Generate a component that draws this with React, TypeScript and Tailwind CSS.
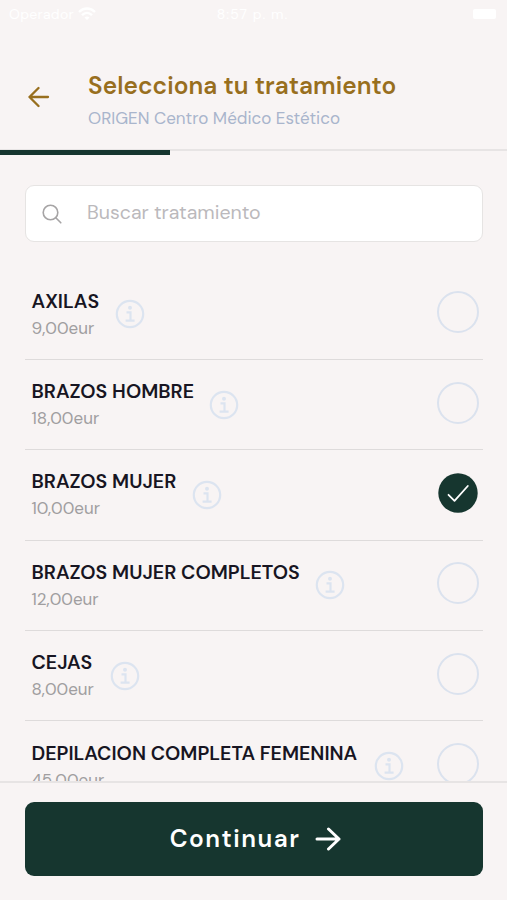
import React from "react";

type Treatment = {
  name: string;
  price: string;
  column: string;
  selected?: boolean;
};

const treatments: Treatment[] = [
  { name: "AXILAS", price: "9,00eur", column: "w-[67.5px]" },
  { name: "BRAZOS HOMBRE", price: "18,00eur", column: "w-[161.5px]" },
  { name: "BRAZOS MUJER", price: "10,00eur", column: "w-[144.5px]", selected: true },
  { name: "BRAZOS MUJER COMPLETOS", price: "12,00eur", column: "w-[267.5px]" },
  { name: "CEJAS", price: "8,00eur", column: "w-[62.5px]" },
  { name: "DEPILACION COMPLETA FEMENINA", price: "45,00eur", column: "w-[326.5px]" },
];

function StatusBar() {
  return (
    <div className="flex h-[28px] items-center justify-between pl-[9px] pr-[11px] text-[14px] leading-none text-white">
      <div className="flex w-[100px] items-center gap-[4px]">
        <span className="tracking-[0.3px]">Operador</span>
        <svg width="18" height="14" viewBox="0 0 18 14" fill="none" stroke="currentColor" strokeWidth="2.4">
          <path d="M1 5c4.5-4.6 11.5-4.6 16 0M4 8.2c3-2.9 7-2.9 10 0" />
          <path d="M6.5 10.5c1.5-1.3 3.5-1.3 5 0L9 13z" fill="currentColor" stroke="none" />
        </svg>
      </div>
      <span className="tracking-[1px]">8:57 p. m.</span>
      <div className="flex w-[100px] justify-end">
        <div className="h-[10px] w-[23px] rounded-[2px] bg-white" />
      </div>
    </div>
  );
}

function InfoIcon() {
  return (
    <svg className="shrink-0" width="30" height="30" viewBox="0 0 30 30" fill="none" stroke="#dce4f0" strokeWidth="2.2">
      <circle cx="15" cy="15" r="13.2" />
      <circle cx="15" cy="8.8" r="2" fill="#dce4f0" stroke="none" />
      <path d="M11.5 13.3h4v8.4M10.6 21.7h9" />
    </svg>
  );
}

function Radio({ selected }: { selected?: boolean }) {
  if (selected) {
    return (
      <svg className="-mt-[4px] shrink-0" width="42" height="42" viewBox="0 0 42 42" fill="none">
        <circle cx="21" cy="21" r="19.7" fill="#16362f" />
        <path d="m11.5 22.8 6 6L30.8 14" stroke="#fff" strokeWidth="1.8" strokeLinecap="round" strokeLinejoin="round" />
      </svg>
    );
  }
  return <div className="-mt-[4px] size-[42px] shrink-0 rounded-full border-2 border-[#dbe2ee]" />;
}

function Row({ item }: { item: Treatment }) {
  return (
    <li className="flex h-[90.4px] shrink-0 items-center border-b-[1.5px] border-[#dedbdb] pl-[6.5px] pr-[4px]">
      <div className={`${item.column} h-[53px] shrink-0 whitespace-nowrap`}>
        <div className="text-[19.6px] leading-[27px] font-semibold text-[#171522]">{item.name}</div>
        <div className="text-[17px] leading-[26px] text-[#a09ea0]">{item.price}</div>
      </div>
      <div className="ml-[16px] flex flex-1 items-center justify-between">
        <InfoIcon />
        <Radio selected={item.selected} />
      </div>
    </li>
  );
}

export default function App() {
  return (
    <div className="flex h-[900px] w-[507px] flex-col overflow-hidden bg-[#f8f4f4] font-['DM_Sans',Inter,sans-serif]">
      <StatusBar />
      <header className="flex h-[121px] shrink-0 items-start pl-[28px] pt-[41px]">
        <svg className="mt-[17px]" width="22" height="22" viewBox="0 0 22 22" fill="none" stroke="#986f1e" strokeWidth="2.3" strokeLinecap="round" strokeLinejoin="round">
          <path d="M20 11H1.5M10.5 2l-9 9 9 9" />
        </svg>
        <div className="ml-[38px] whitespace-nowrap">
          <h1 className="mt-[1px] text-[24.4px] leading-[33px] font-semibold tracking-[0.08px] text-[#986f1e]">Selecciona tu tratamiento</h1>
          <p className="mt-[3px] text-[17px] leading-[25px] text-[#a9b5cc]">ORIGEN Centro Médico Estético</p>
        </div>
      </header>
      <div className="h-[6px] shrink-0 border-t-2 border-[#e7e4e4]">
        <div className="-mt-[1px] h-[5px] w-[170px] bg-[#16362f]" />
      </div>
      <main className="flex min-h-0 flex-1 flex-col overflow-hidden px-[25px] pt-[30px]">
        <label className="flex h-[57px] w-[458px] shrink-0 items-center rounded-[9px] border-[1.5px] border-[#e6e4e3] bg-white pl-[16px]">
          <svg width="20" height="20" viewBox="0 0 20 20" fill="none" stroke="#a6a4a5" strokeWidth="1.6" strokeLinecap="round">
            <circle cx="8.5" cy="8.5" r="7.3" />
            <path d="m13.8 13.8 5 5" />
          </svg>
          <span className="ml-[25px] pb-[2px] text-[19.5px] text-[#bbb9bc]">Buscar tratamiento</span>
        </label>
        <ul className="mt-[27.5px] flex w-[458px] flex-col">
          {treatments.map((item) => (
            <Row key={item.name} item={item} />
          ))}
        </ul>
      </main>
      <footer className="h-[119px] shrink-0 border-t-2 border-[#e7e4e4] px-[25px] pt-[19px]">
        <button className="flex h-[74px] w-[458px] items-center justify-center rounded-[9px] bg-[#16362f] pl-[3px] text-white">
          <span className="text-[24.4px] leading-[32px] font-semibold tracking-[1.5px]">Continuar</span>
          <svg className="ml-[15px]" width="26" height="24" viewBox="0 0 26 24" fill="none" stroke="currentColor" strokeWidth="3" strokeLinecap="round" strokeLinejoin="round">
            <path d="M2 12h22M13.5 2l10.500 10-10.500 10" />
          </svg>
        </button>
      </footer>
    </div>
  );
}
